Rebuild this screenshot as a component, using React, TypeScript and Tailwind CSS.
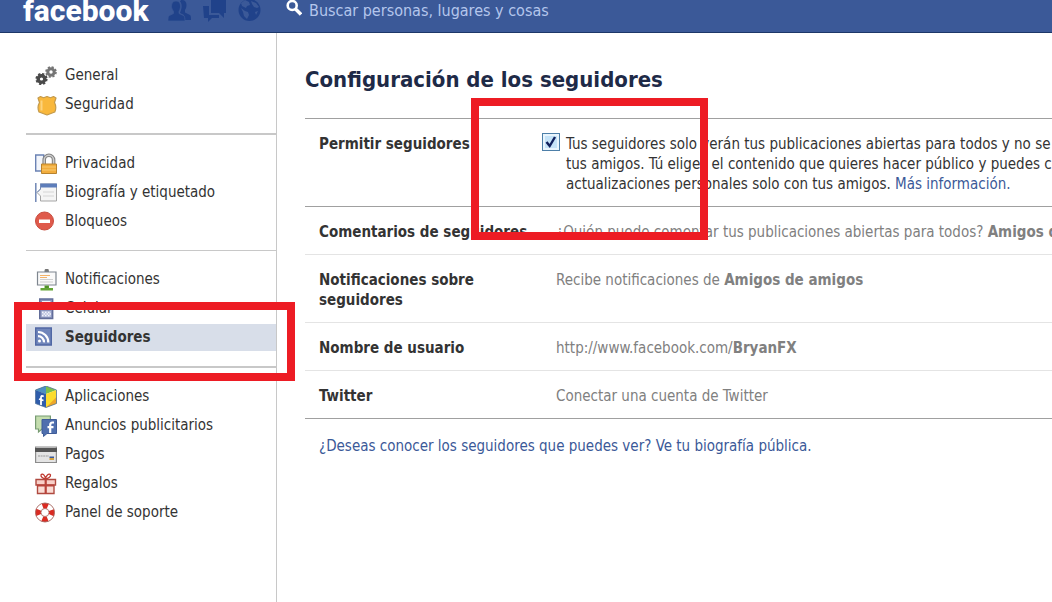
import { useState } from 'react';
import type { JSX, ReactNode } from 'react';

interface MenuItem {
  label: string;
  icon: ReactNode;
  active?: boolean;
}

const GearsIcon = (): JSX.Element => (
  <svg viewBox="0 0 22 22" className="size-[22px]" fill="none">
    <circle cx="6.500" cy="14" r="3.300" stroke="#4a4a4a" strokeWidth="3.400" />
    <circle cx="6.500" cy="14" r="5.200" stroke="#4a4a4a" strokeWidth="1.800" strokeDasharray="2.300 1.780" />
    <circle cx="16" cy="7" r="3.200" stroke="#757575" strokeWidth="3" />
    <circle cx="16" cy="7" r="5" stroke="#757575" strokeWidth="1.600" strokeDasharray="2.200 1.730" />
  </svg>
);

const BadgeIcon = (): JSX.Element => (
  <svg viewBox="0 0 22 22" className="size-[22px]">
    <path d="M3 4L5.500 2.500l3 1.200L12 2.500l3.500 1.200L18.500 2.500 21 4l-1.500 4.500c1.600 3 1.600 6.500.3 9.500L12 21 4 18c-1.300-3-1.300-6.500.5-9.500z" fill="#f9b83c" stroke="#c39a4c" strokeWidth="1.200" strokeLinejoin="round" />
    <path d="M6.500 6.500v10" stroke="#fdd37c" strokeWidth="2" />
  </svg>
);

const PrivacyIcon = (): JSX.Element => (
  <svg viewBox="0 0 22 22" className="size-[22px]" fill="none">
    <path d="M.7 2h8v16h-8z" fill="#f2f5fb" stroke="#6b82b4" strokeWidth="1.400" />
    <path d="M9.200 12V7a4.700 4.700 0 0 1 9.400 0v5" stroke="#858585" strokeWidth="3.600" />
    <path d="M9.200 12V7a4.700 4.700 0 0 1 9.400 0v5" stroke="#cfcfcf" strokeWidth="1.400" />
    <path d="M6.500 11h15v9.500h-15z" fill="#f2ad3d" stroke="#b8832e" />
    <path d="M7 14h14M7 17h14" stroke="#f9cb72" />
  </svg>
);

const TimelineIcon = (): JSX.Element => (
  <svg viewBox="0 0 22 22" className="size-[22px]" fill="none">
    <path d="M.8 1v19" stroke="#7087b5" strokeWidth="1.500" />
    <path d="M5.500 2h16v17h-16v-5L2 10.500 5.500 7z" fill="#f5f5f5" stroke="#a5a5a5" />
    <path d="M5 1.500h17V5.500H5z" fill="#5d7dba" />
    <path d="M2 10.500L5.500 7V2" stroke="#7087b5" />
    <path d="M8 10h11M8 14h11" stroke="#d5d5d5" />
  </svg>
);

const BlockIcon = (): JSX.Element => (
  <svg viewBox="0 0 22 22" className="size-[22px]">
    <circle cx="9.500" cy="10" r="9" fill="#df5a4b" stroke="#c94b3d" />
    <path d="M4 8.500h11V12H4z" fill="#fff" />
  </svg>
);

const NotificationsIcon = (): JSX.Element => (
  <svg viewBox="0 0 22 22" className="size-[22px]" fill="none">
    <path d="M10 3V1.500a1.700 1.700 0 0 1 3.400 0V3" fill="#777" stroke="#777" />
    <path d="M2.500 3h18.500v13H2.500z" fill="#fafafa" stroke="#7e868f" strokeWidth="1.200" />
    <path d="M5 6.500h10M5 8.500h7" stroke="#f4b36a" />
    <path d="M5 10.500h13M5 13h13" stroke="#cfcfcf" />
    <path d="M9.500 16.500h4.500V19h4v2.500H5.500V19h4z" fill="#65a637" />
    <path d="M10 18h3.500" stroke="#3d7a20" />
  </svg>
);

const PhoneIcon = (): JSX.Element => (
  <svg viewBox="0 0 22 22" className="size-[22px]" fill="none">
    <path d="M4.700 1h13v19.500h-13z" fill="#8a94bd" stroke="#626d99" strokeWidth="1.400" />
    <path d="M7 3h8.500v6H7z" fill="#f1f4fb" />
    <path d="M6.500 13h9.500v6H6.500z" fill="#b5bddb" />
    <path d="M7 14.500h9M7 17.500h9" stroke="#f3f5fc" strokeWidth="1.500" strokeDasharray="1.500 1.500" />
    <path d="M8.500 16h8" stroke="#f3f5fc" strokeWidth="1.500" strokeDasharray="1.500 1.500" />
  </svg>
);

const FeedIcon = (): JSX.Element => (
  <svg viewBox="0 0 22 22" className="size-[22px]" fill="none">
    <path d="M.7 1h15.600v17H.7z" fill="#7186bb" stroke="#5067a4" strokeWidth="1.400" />
    <circle cx="4.500" cy="14" r="1.500" fill="#fff" />
    <path d="M3 9.200a6 6 0 0 1 6 6.200M3 5a10.300 10.300 0 0 1 10.300 10.400" stroke="#fff" strokeWidth="2.200" />
  </svg>
);

const AppsIcon = (): JSX.Element => (
  <svg viewBox="0 0 22 22" className="size-[22px]" fill="none">
    <path d="M11 0l10.500 4L11 8 .5 4z" fill="#7bbf4b" />
    <path d="M11 0L.5 4 11 8z" fill="#4b8fc4" />
    <path d="M.5 4L11 8v13.500L.5 17.500z" fill="#2f5dab" />
    <path d="M21.500 4L11 8v13.500l10.500-4z" fill="#fbdc2e" />
    <path d="M21.500 11v6.500l-10.500 4z" fill="#eda72a" />
    <path d="M8.700 10.500C6.500 9.300 6 10 6 12v7M4 13l4.500 1.500" stroke="#fff" strokeWidth="1.800" />
    <path d="M11 0l10.500 4v13.500L11 21.500.5 17.500V4z" stroke="#52749b" strokeWidth=".8" />
  </svg>
);

const AdsIcon = (): JSX.Element => (
  <svg viewBox="0 0 22 22" className="size-[22px]" fill="none">
    <path d="M.6 1h14.800v13H7l-3.500 3V14H.6z" fill="#c4ddae" stroke="#779b72" strokeWidth="1.200" />
    <path d="M7 4.500h14.500v14H12L8.500 21.500v-3H7z" fill="#4f6fae" stroke="#3f5c98" />
    <path d="M19 7.500h-1.500c-1.700 0-2.300 1-2.300 2.500v8M12.500 12.200h6" stroke="#fff" strokeWidth="2.200" />
  </svg>
);

const CardIcon = (): JSX.Element => (
  <svg viewBox="0 0 22 22" className="size-[22px]" fill="none">
    <path d="M.6 3h20.800v15.500H.6z" fill="#e4e4e4" stroke="#8c8c8c" strokeWidth="1.200" />
    <path d="M0 4h22v4H0z" fill="#555" />
    <path d="M3 12h11" stroke="#999" strokeDasharray="2 .6" />
    <path d="M14.500 12.500h4.500v1.500h-4.500z" fill="#3c5a9c" />
    <path d="M14.500 14h4.500V16h-4.500z" fill="#d5a33f" />
  </svg>
);

const GiftIcon = (): JSX.Element => (
  <svg viewBox="0 0 22 22" className="size-[22px]" fill="none">
    <path d="M10.500 6C8 5.500 5.500 4 6 1.800 7.500-.5 10.500 3 10.500 6zm0 0c2.500-.5 5.500-2 5-4.200C14 -.5 10.500 3 10.500 6z" stroke="#c0392f" strokeWidth="1.300" />
    <path d="M2.500 12h16.500v8.500H2.500z" fill="#fadcd5" stroke="#b04a40" strokeWidth="1.400" />
    <path d="M1 6.500h19.500V12H1z" fill="#f9d0c8" stroke="#b04a40" strokeWidth="1.400" />
    <path d="M10.700 6v15M2 12.500h17" stroke="#b8433a" strokeWidth="2.200" />
  </svg>
);

const SupportIcon = (): JSX.Element => (
  <svg viewBox="0 0 22 22" className="size-[22px]" fill="none">
    <circle cx="10" cy="10.500" r="6.800" stroke="#fff" strokeWidth="5" />
    <circle cx="10" cy="10.500" r="6.800" stroke="#d92b22" strokeWidth="5.400" strokeDasharray="5.340 5.340" strokeDashoffset="2.670" />
    <circle cx="10" cy="10.500" r="9.500" stroke="#a6655f" strokeWidth=".9" />
    <circle cx="10" cy="10.500" r="4" stroke="#a6655f" strokeWidth=".8" />
  </svg>
);

const MENU_GROUPS: MenuItem[][] = [
  [
    { label: 'General', icon: <GearsIcon /> },
    { label: 'Seguridad', icon: <BadgeIcon /> },
  ],
  [
    { label: 'Privacidad', icon: <PrivacyIcon /> },
    { label: 'Biografía y etiquetado', icon: <TimelineIcon /> },
    { label: 'Bloqueos', icon: <BlockIcon /> },
  ],
  [
    { label: 'Notificaciones', icon: <NotificationsIcon /> },
    { label: 'Celular', icon: <PhoneIcon /> },
    { label: 'Seguidores', icon: <FeedIcon />, active: true },
  ],
  [
    { label: 'Aplicaciones', icon: <AppsIcon /> },
    { label: 'Anuncios publicitarios', icon: <AdsIcon /> },
    { label: 'Pagos', icon: <CardIcon /> },
    { label: 'Regalos', icon: <GiftIcon /> },
    { label: 'Panel de soporte', icon: <SupportIcon /> },
  ],
];

const DIVIDERS = [ '', 'my-[14px] border-t-2', 'my-[14px] border-t', 'my-[14px] border-t-2' ];

const Header = (): JSX.Element => (
  <header className="h-[33px] overflow-hidden border-b border-[#1d3768] bg-[#3b5998]">
    <div className="flex h-[21px] items-center pl-[23px]">
      <a href="#" className="w-[145px] font-[Roboto,sans-serif] text-[30px] leading-[21px] font-extrabold text-white">facebook</a>
      <nav className="flex w-[118px] gap-[12px]">
        <button type="button" aria-label="Solicitudes de amistad">
          <svg viewBox="0 0 23 23" className="size-[23px]" fill="#20428a">
            <path d="M14 1c3 0 4.500 2 4.500 5 0 2-.7 4-1.500 5v2.500l5 2.500c1 .6 1 3 1 5h-6l-1-5-4-2 1-3c1-2 1-7-1-8.500C12.500 1.500 13 1 14 1z" />
            <path d="M8 2c3 0 4.500 2 4.500 5.200 0 2-.7 4-1.500 5v2.300l4.500 2c1.200.6 1.500 3 1.500 5.500H0c0-2.500.2-5 1.500-5.500l4-2v-2.300c-1-1-2-3-2-5C3.500 4 5 2 8 2z" stroke="#3b5998" strokeWidth=".7" />
          </svg>
        </button>
        <button type="button" aria-label="Mensajes">
          <svg viewBox="0 0 23 23" className="size-[23px]" fill="#20428a">
            <path d="M8 0h15v14h-2v5l-5-5H8z" />
            <path d="M0 7h6v9h10v3H9l-4 4v-4H1z" />
          </svg>
        </button>
        <button type="button" aria-label="Notificaciones">
          <svg viewBox="0 0 23 23" className="size-[23px]">
            <circle cx="11.500" cy="11" r="11" fill="#20428a" />
            <path d="M7 1l4 2 1 3-3 1-1 2-4-2-1-3zM13 2l5 2 3 4-2 1-3-1-2-3zM3 9l4 3 3 1 1 3-2 4-3-3-1-4zM17 13l3-1-2 4z" fill="#3b5998" />
          </svg>
        </button>
      </nav>
      <label htmlFor="search" className="flex h-[21px] flex-1 items-start">
        <svg viewBox="0 0 16 16" className="size-[16px]" fill="none" aria-label="Buscar">
          <circle cx="6.200" cy="5.500" r="4.500" stroke="#fff" strokeWidth="2.600" />
          <path d="M9.500 9l5.500 5.500" stroke="#fff" strokeWidth="3.400" />
        </svg>
        <input
          id="search"
          type="text"
          placeholder="Buscar personas, lugares y cosas"
          className="ml-[7px] h-[21px] flex-1 bg-transparent text-[16px] outline-none placeholder:text-[#b4c6ec]"
        />
      </label>
    </div>
  </header>
);

const Sidebar = (): JSX.Element => (
  <aside className="relative w-[277px] shrink-0 border-r border-[#c8c8c8] pt-[28px] pl-[26px]">
    {MENU_GROUPS.map((group, index) => (
      <div key={group[0].label}>
        {index > 0 && <hr className={`${DIVIDERS[index]} border-[#c8c8c8]`} />}
        <ul>
          {group.map(item => (
            <li key={item.label} className="py-px">
              <a
                href="#"
                className={`flex h-[27px] items-center gap-[8px] pl-[9px] ${item.active ? 'bg-[#d8dee9] font-bold' : ''}`}
              >
                {item.icon}
                {item.label}
              </a>
            </li>
          ))}
        </ul>
      </div>
    ))}
    <div className="pointer-events-none absolute top-[269px] left-[14px] h-[79px] w-[281px] border-8 border-[#ed1c24]" />
  </aside>
);

const SettingRow = ({ label, children }: { label: string; children: ReactNode }): JSX.Element => (
  <div className="flex border-b border-[#e4e4e4] pt-[15px] pb-[12px] pl-[14px] leading-[20px] first:border-[#a0a0a0] last:border-[#a0a0a0]">
    <dt className="w-[223px] shrink-0 pr-[8px] font-bold">{label}</dt>
    <dd className="whitespace-nowrap text-[#808080]">{children}</dd>
  </div>
);

const App = (): JSX.Element => {
  const [ allowFollowers, setAllowFollowers ] = useState<boolean>(true);

  return (
    <div className='flex min-h-screen flex-col overflow-hidden bg-white font-["DejaVu_Sans_Condensed",sans-serif] text-[15px] text-[#333]'>
      <Header />
      <div className="flex flex-1">
        <Sidebar />
        <main className="relative z-10 min-w-0 flex-1 pt-[32px] pl-[28px]">
          <h1 className="text-[22px] leading-[30px] font-bold text-[#1e2a47]">Configuración de los seguidores</h1>
          <dl className="mt-[23px] overflow-hidden border-t border-[#a0a0a0]">
            <SettingRow label="Permitir seguidores">
              <div className="flex gap-[6px] text-[#333]">
                <span className="relative -mt-px size-[18px] shrink-0">
                  <input
                    id="allow-followers"
                    type="checkbox"
                    checked={allowFollowers}
                    onChange={(e) => setAllowFollowers(e.target.checked)}
                    className="block size-[18px] appearance-none border border-[#4d7fa8] bg-[#c5e3f8] shadow-[inset_0_0_0_2px_#e9f5fd]"
                  />
                  {allowFollowers &&
                    <svg viewBox="0 0 18 18" className="pointer-events-none absolute inset-0 size-[18px]" fill="none">
                      <path d="M4.500 9l3.200 4L13 4" stroke="#0f1f5c" strokeWidth="2.400" />
                    </svg>
                  }
                </span>
                <label htmlFor="allow-followers">
                  Tus seguidores solo verán tus publicaciones abiertas para todos y no se<br />
                  tus amigos. Tú eliges el contenido que quieres hacer público y puedes compartir<br />
                  actualizaciones personales solo con tus amigos. <a href="#" className="text-[#3b5998]">Más información.</a>
                </label>
              </div>
            </SettingRow>
            <SettingRow label="Comentarios de seguidores">
              <p className="pl-[14px]">¿Quién puede comentar tus publicaciones abiertas para todos? <strong>Amigos de amigos</strong></p>
            </SettingRow>
            <SettingRow label="Notificaciones sobre seguidores">
              <p className="pl-[14px]">Recibe notificaciones de <strong>Amigos de amigos</strong></p>
            </SettingRow>
            <SettingRow label="Nombre de usuario">
              <p className="pl-[14px]">http://www.facebook.com/<strong>BryanFX</strong></p>
            </SettingRow>
            <SettingRow label="Twitter">
              <p className="pl-[14px]">Conectar una cuenta de Twitter</p>
            </SettingRow>
          </dl>
          <a href="#" className="mt-[17px] ml-[14px] block leading-[20px] text-[#3b5998]">¿Deseas conocer los seguidores que puedes ver? Ve tu biografía pública.</a>
          <div className="pointer-events-none absolute top-[65px] left-[194px] h-[142px] w-[237px] border-8 border-[#ed1c24]" />
        </main>
      </div>
    </div>
  );
};

export default App;
